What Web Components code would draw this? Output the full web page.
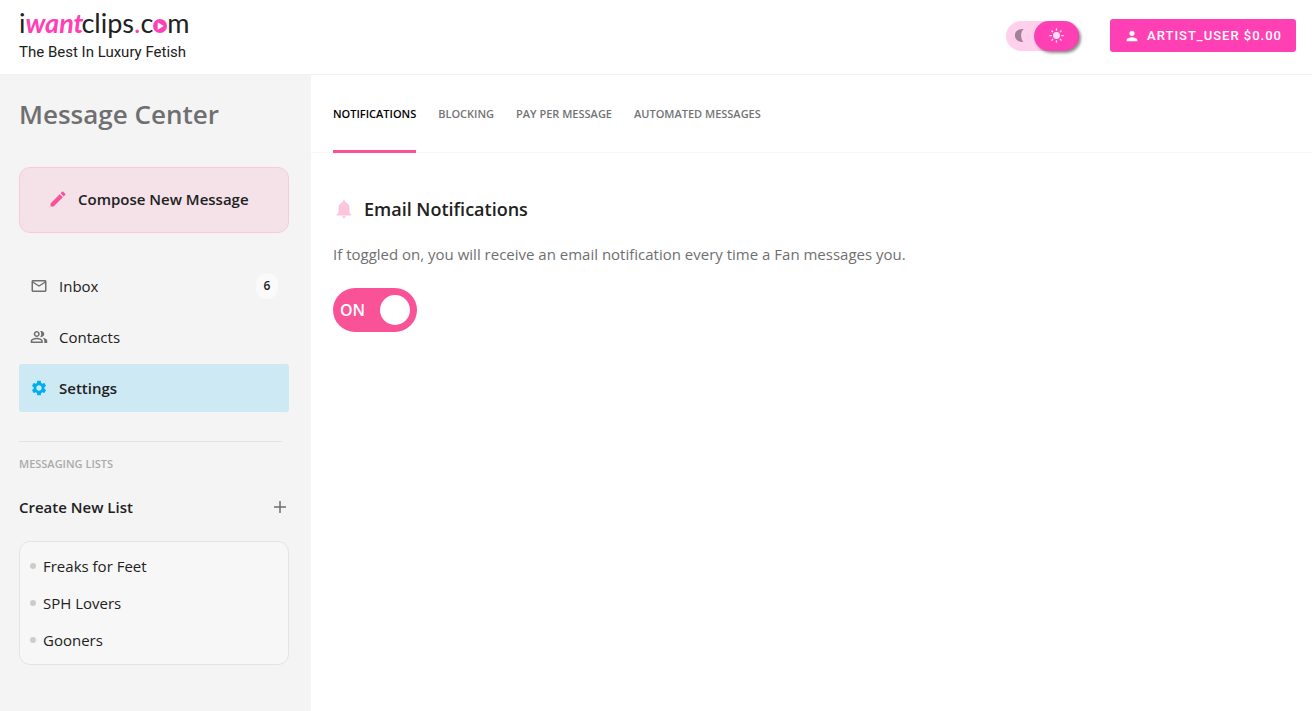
<!DOCTYPE html>
<html lang="en">
<head>
<meta charset="utf-8">
<meta name="viewport" content="width=device-width, initial-scale=1">
<title>Message Center</title>
<style>
  body {
    margin: 0;
    font-family: "Open Sans", sans-serif;
    font-size: 15px;
    line-height: 20px;
    color: #212121;
    background: #fff;
  }
</style>
</head>
<body>
<iwc-app></iwc-app>

<script>
/** @const {Object} - Icon paths, all on a 24x24 grid. */
const ICONS = {
  account: "M12 12c2.21 0 4-1.79 4-4s-1.79-4-4-4-4 1.79-4 4 1.79 4 4 4zm0 2c-2.67 0-8 1.34-8 4v2h16v-2c0-2.66-5.33-4-8-4z",
  pencil: "M3 17.25V21h3.75L17.81 9.94l-3.75-3.75L3 17.25zM20.71 7.04c.39-.39.39-1.02 0-1.41l-2.34-2.34c-.39-.39-1.02-.39-1.41 0l-1.83 1.83 3.75 3.75 1.83-1.83z",
  mail: "M22 6c0-1.1-.9-2-2-2H4c-1.1 0-2 .9-2 2v12c0 1.1.9 2 2 2h16c1.1 0 2-.9 2-2V6zm-2 0l-8 5-8-5h16zm0 12H4V8l8 5 8-5v10z",
  people: "M16.67 13.13C18.04 14.06 19 15.32 19 17v3h4v-3c0-2.18-3.57-3.47-6.33-3.87zM15 12c2.21 0 4-1.79 4-4s-1.79-4-4-4c-.47 0-.91.1-1.33.24C14.5 5.27 15 6.58 15 8s-.5 2.73-1.33 3.76c.42.14.86.24 1.33.24zM9 12c2.21 0 4-1.79 4-4s-1.79-4-4-4-4 1.79-4 4 1.79 4 4 4zm0-6c1.1 0 2 .9 2 2s-.9 2-2 2-2-.9-2-2 .9-2 2-2zm0 7c-2.67 0-8 1.34-8 4v3h16v-3c0-2.66-5.33-4-8-4zm6 5H3v-.99C3.2 16.29 6.3 15 9 15s5.8 1.29 6 2v1z",
  cog: "M19.14 12.94c.04-.3.06-.61.06-.94 0-.32-.02-.64-.07-.94l2.03-1.58c.18-.14.23-.41.12-.61l-1.92-3.32c-.12-.22-.37-.29-.59-.22l-2.39.96c-.5-.38-1.03-.7-1.62-.94l-.36-2.54c-.04-.24-.24-.41-.48-.41h-3.84c-.24 0-.43.17-.47.41l-.36 2.54c-.59.24-1.13.57-1.62.94l-2.39-.96c-.22-.08-.47 0-.59.22L2.74 8.87c-.12.21-.08.47.12.61l2.03 1.58c-.05.3-.09.63-.09.94s.02.64.07.94l-2.03 1.58c-.18.14-.23.41-.12.61l1.92 3.32c.12.22.37.29.59.22l2.39-.96c.5.38 1.03.7 1.62.94l.36 2.54c.05.24.24.41.48.41h3.84c.24 0 .44-.17.47-.41l.36-2.54c.59-.24 1.13-.56 1.62-.94l2.39.96c.22.08.47 0 .59-.22l1.92-3.32c.12-.22.07-.47-.12-.61l-2.01-1.58zM12 15.6c-1.98 0-3.6-1.62-3.6-3.6s1.62-3.6 3.6-3.6 3.6 1.62 3.6 3.6-1.62 3.6-3.6 3.6z",
  bell: "M12 22c1.1 0 2-.9 2-2h-4c0 1.1.89 2 2 2zm6-6v-5c0-3.07-1.64-5.64-4.5-6.32V4c0-.83-.67-1.5-1.5-1.5s-1.5.67-1.5 1.5v.68C7.63 5.36 6 7.92 6 11v5l-2 2v1h16v-1l-2-2z",
  plus: "M11 4h2v7h7v2h-7v7h-2v-7H4v-2h7z",
  moon: "M17 1.500C8 1 3 6 3 12s5 11 14 10.500c-2.500-2-4-6-4-10.500s1.500-8.500 4-10.500z",
  sun: "M12 6.500a5.500 5.500 0 1 0 0 11 5.500 5.500 0 0 0 0-11zM11 .5h2v4h-2zM11 19.500h2v4h-2zM.5 11h4v2h-4zM19.500 11h4v2h-4zM3.200 4.600l1.400-1.400 2.600 2.600-1.400 1.400zM16.800 18.200l1.400-1.400 2.600 2.600-1.400 1.400zM4.600 20.800l-1.400-1.400 2.600-2.600 1.400 1.400zM18.200 7.200l-1.400-1.400 2.600-2.600 1.400 1.400z"
};

/**
 * Create a template from its markup.
 *
 * @param {string} html - Styles and markup of the element.
 * @return {HTMLTemplateElement}
 */
function createTemplate(html) {
  const template = document.createElement("template");
  template.innerHTML = html;
  return template;
}

/** Base class, it clones the element's template in an open shadow root. */
class BaseElement extends HTMLElement {
  constructor() {
    super();
    this.root = this.attachShadow({ mode: "open" });
    this.root.appendChild(this.constructor.template.content.cloneNode(true));
  }
}

class Icon extends BaseElement {
  static template = createTemplate(`
    <style>
      :host {
        display: block;
        flex: none;
        width: 18px;
        height: 18px;
      }

      svg {
        display: block;
        width: 100%;
        height: 100%;
        fill: currentColor;
      }
    </style>

    <svg viewBox="0 0 24 24" aria-hidden="true"><path></path></svg>
  `);

  static observedAttributes = ["name"];

  attributeChangedCallback(attribute, oldValue, value) {
    this.root.querySelector("path").setAttribute("d", ICONS[value] || "");
  }
}

class Logo extends BaseElement {
  static template = createTemplate(`
    <style>
      :host {
        display: block;
      }

      a {
        display: grid;
        gap: 8px;
        color: #212121;
        text-decoration: none;
      }

      .name {
        display: flex;
        align-items: baseline;
        font-family: Lato, sans-serif;
        font-size: 27px;
        line-height: 24px;
      }

      .script {
        margin-right: -2px;
        font-style: italic;
        font-weight: 700;
      }

      .script,
      .dot {
        color: #ff40b4;
      }

      svg {
        width: 14px;
        height: 14px;
      }

      .tagline {
        font-family: Roboto, sans-serif;
        font-size: 15px;
        line-height: 18px;
      }
    </style>

    <a href="#">
      <div class="name"><span>i</span><span class="script">want</span><span>clips</span><span class="dot">.</span><span>c</span><svg viewBox="0 0 15 15" role="img" aria-label="o"><circle cx="7.500" cy="7.500" r="7.500" fill="#ff40b4"/><path d="M5 3.500v8l6.500-4z" fill="#fff"/></svg><span>m</span></div>
      <div class="tagline">The Best In Luxury Fetish</div>
    </a>
  `);
}

class ThemeToggle extends BaseElement {
  static template = createTemplate(`
    <style>
      :host {
        display: block;
      }

      label {
        position: relative;
        display: flex;
        align-items: center;
        justify-content: space-between;
        width: 73px;
        height: 30px;
        border-radius: 15px;
        background: #ffd0ec;
        cursor: pointer;
      }

      input {
        position: absolute;
        inset: 0;
        margin: 0;
        opacity: 0;
      }

      .moon {
        width: 15px;
        height: 15px;
        margin-left: 7px;
        color: #a37f98;
      }

      .knob {
        display: grid;
        place-items: center;
        width: 45px;
        height: 30px;
        border-radius: 15px;
        color: #ffe3f4;
        background: #ff40b4;
        box-shadow: 2px 2px 3px rgba(0, 0, 0, 0.45);
      }

      .sun {
        width: 15px;
        height: 15px;
      }
    </style>

    <label>
      <input type="checkbox" aria-label="Light theme" checked>
      <iwc-icon class="moon" name="moon"></iwc-icon>
      <span class="knob"><iwc-icon class="sun" name="sun"></iwc-icon></span>
    </label>
  `);
}

class Header extends BaseElement {
  static template = createTemplate(`
    <style>
      :host {
        display: block;
      }

      header {
        display: flex;
        align-items: center;
        justify-content: space-between;
        box-sizing: border-box;
        height: 75px;
        padding: 0 16px 3px 19px;
        border-bottom: 1px solid #f2f2f2;
      }

      .actions {
        display: flex;
        align-items: center;
        gap: 31px;
      }

      button {
        display: flex;
        align-items: center;
        gap: 7px;
        height: 33px;
        padding: 0 14px;
        border: 0;
        border-radius: 3px;
        font: 500 13px/20px Roboto, sans-serif;
        letter-spacing: 1px;
        color: #fff;
        background: #ff40b4;
      }

      button iwc-icon {
        width: 16px;
        height: 16px;
      }
    </style>

    <header>
      <iwc-logo></iwc-logo>
      <div class="actions">
        <iwc-theme-toggle></iwc-theme-toggle>
        <button type="button"><iwc-icon name="account"></iwc-icon>ARTIST_USER $0.00</button>
      </div>
    </header>
  `);
}

class NavItem extends BaseElement {
  static template = createTemplate(`
    <style>
      :host {
        display: block;
      }

      a {
        display: flex;
        align-items: center;
        gap: 11px;
        height: 48px;
        padding: 0 11px;
        border-radius: 3px;
        color: inherit;
        text-decoration: none;
      }

      iwc-icon {
        color: #707073;
      }

      :host([active]) a {
        font-weight: 600;
        background: #cde9f4;
      }

      :host([active]) iwc-icon {
        color: #00aeef;
      }

      ::slotted([slot="badge"]) {
        min-width: 22px;
        margin-left: auto;
        border-radius: 13px;
        font-size: 12px;
        font-weight: 600;
        line-height: 26px;
        text-align: center;
        background: #fafafa;
      }
    </style>

    <a href="#">
      <iwc-icon></iwc-icon>
      <slot></slot>
      <slot name="badge"></slot>
    </a>
  `);

  connectedCallback() {
    this.root.querySelector("iwc-icon").setAttribute("name", this.getAttribute("icon"));
    if (this.hasAttribute("active")) {
      this.root.querySelector("a").setAttribute("aria-current", "page");
    }
  }
}

class MessagingLists extends BaseElement {
  static template = createTemplate(`
    <style>
      :host {
        display: block;
      }

      h2 {
        margin: 0;
        font-size: 11px;
        font-weight: 600;
        line-height: 20px;
        color: #ababab;
      }

      button {
        display: flex;
        align-items: center;
        justify-content: space-between;
        width: 100%;
        margin: 23px 0 24px;
        padding: 0;
        border: 0;
        font: 600 15px/20px "Open Sans", sans-serif;
        color: #212121;
        background: none;
      }

      button iwc-icon {
        color: #6e6e70;
      }

      ul {
        display: grid;
        gap: 17px;
        margin: 0;
        padding: 14px 10px;
        border: 1px solid #e4e4e4;
        border-radius: 11px;
        list-style: none;
        background: #f7f7f7;
      }

      li {
        display: flex;
        align-items: center;
        gap: 7px;
      }

      li::before {
        content: "";
        width: 6px;
        height: 6px;
        border-radius: 50%;
        background: #ccc;
      }

      a {
        color: inherit;
        text-decoration: none;
      }
    </style>

    <h2>MESSAGING LISTS</h2>
    <button type="button">Create New List<iwc-icon name="plus"></iwc-icon></button>
    <ul>
      <li><a href="#">Freaks for Feet</a></li>
      <li><a href="#">SPH Lovers</a></li>
      <li><a href="#">Gooners</a></li>
    </ul>
  `);
}

class Sidebar extends BaseElement {
  static template = createTemplate(`
    <style>
      :host {
        display: block;
        flex: none;
        box-sizing: border-box;
        width: 311px;
        padding: 19px 22px 20px 19px;
        background: #f4f4f4;
      }

      h1 {
        margin: 0 0 33px;
        font-size: 26px;
        font-weight: 600;
        line-height: 40px;
        color: #6f6f72;
      }

      .compose {
        display: flex;
        align-items: center;
        gap: 10px;
        width: 100%;
        height: 66px;
        padding: 0 28px 2px;
        border: 1px solid #f8cbdb;
        border-radius: 11px;
        font: 600 15px/20px "Open Sans", sans-serif;
        color: #212121;
        background: #f4e2e8;
      }

      .compose iwc-icon {
        width: 20px;
        height: 20px;
        color: #f95297;
      }

      nav {
        display: grid;
        gap: 3px;
        margin: 29px 0;
      }

      hr {
        margin: 0 7px 12px 0;
        border: 0;
        border-top: 1px solid #e2e2e2;
      }
    </style>

    <h1>Message Center</h1>
    <button class="compose" type="button"><iwc-icon name="pencil"></iwc-icon>Compose New Message</button>
    <nav>
      <iwc-nav-item icon="mail">Inbox<span slot="badge">6</span></iwc-nav-item>
      <iwc-nav-item icon="people">Contacts</iwc-nav-item>
      <iwc-nav-item icon="cog" active>Settings</iwc-nav-item>
    </nav>
    <hr>
    <iwc-messaging-lists></iwc-messaging-lists>
  `);
}

class Tabs extends BaseElement {
  static template = createTemplate(`
    <style>
      :host {
        display: block;
      }

      nav {
        display: flex;
        gap: 22px;
        height: 77px;
        padding: 0 22px;
        border-bottom: 1px solid #f7f7f7;
      }

      ::slotted(a) {
        height: 75px;
        border-bottom: 3px solid transparent;
        font-size: 11px;
        font-weight: 600;
        line-height: 78px;
        color: #737376;
        text-decoration: none;
      }

      ::slotted(a[aria-current]) {
        border-color: #f95297;
        color: #000;
      }
    </style>

    <nav><slot></slot></nav>
  `);
}

class Switch extends BaseElement {
  static template = createTemplate(`
    <style>
      :host {
        display: block;
      }

      label {
        position: relative;
        display: flex;
        align-items: center;
        justify-content: space-between;
        box-sizing: border-box;
        width: 84px;
        height: 44px;
        padding: 0 7px;
        border-radius: 22px;
        font-size: 16px;
        font-weight: 600;
        color: #fff;
        background: #f95297;
        cursor: pointer;
      }

      input {
        position: absolute;
        inset: 0;
        margin: 0;
        opacity: 0;
      }

      .knob {
        width: 30px;
        height: 30px;
        border-radius: 50%;
        background: #fff;
      }
    </style>

    <label>
      <input type="checkbox" checked>
      <slot></slot>
      <span class="knob"></span>
    </label>
  `);
}

class NotificationSettings extends BaseElement {
  static template = createTemplate(`
    <style>
      :host {
        display: block;
        padding: 43px 22px;
      }

      .title {
        display: flex;
        align-items: center;
        gap: 9px;
      }

      .title iwc-icon {
        width: 22px;
        height: 22px;
        color: #fcc5dc;
      }

      h2 {
        margin: 0;
        font-size: 18px;
        font-weight: 600;
        line-height: 26px;
      }

      p {
        margin: 22px 0 24px;
        color: #6f6f72;
      }
    </style>

    <div class="title"><iwc-icon name="bell"></iwc-icon><h2>Email Notifications</h2></div>
    <p>If toggled on, you will receive an email notification every time a Fan messages you.</p>
    <iwc-switch>ON</iwc-switch>
  `);
}

class App extends BaseElement {
  static template = createTemplate(`
    <style>
      :host {
        display: flex;
        flex-direction: column;
        min-height: 100vh;
      }

      .body {
        display: flex;
        flex: 1;
      }

      main {
        flex: 1;
        min-width: 0;
      }
    </style>

    <iwc-header></iwc-header>
    <div class="body">
      <iwc-sidebar></iwc-sidebar>
      <main>
        <iwc-tabs>
          <a href="#" aria-current="page">NOTIFICATIONS</a>
          <a href="#">BLOCKING</a>
          <a href="#">PAY PER MESSAGE</a>
          <a href="#">AUTOMATED MESSAGES</a>
        </iwc-tabs>
        <iwc-notification-settings></iwc-notification-settings>
      </main>
    </div>
  `);
}

//  Define the web components
customElements.define("iwc-icon", Icon);
customElements.define("iwc-logo", Logo);
customElements.define("iwc-theme-toggle", ThemeToggle);
customElements.define("iwc-header", Header);
customElements.define("iwc-nav-item", NavItem);
customElements.define("iwc-messaging-lists", MessagingLists);
customElements.define("iwc-sidebar", Sidebar);
customElements.define("iwc-tabs", Tabs);
customElements.define("iwc-switch", Switch);
customElements.define("iwc-notification-settings", NotificationSettings);
customElements.define("iwc-app", App);
</script>
</body>
</html>
